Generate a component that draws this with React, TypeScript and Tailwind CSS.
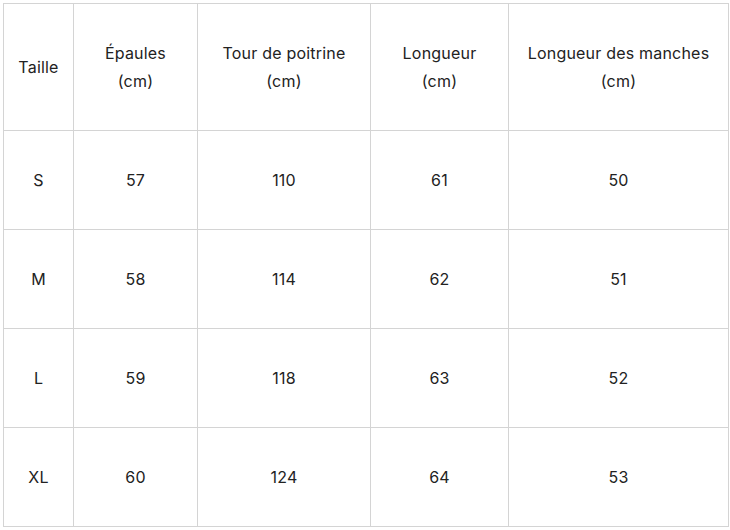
const headers = [
  ['Taille'],
  ['Épaules', '(cm)'],
  ['Tour de poitrine', '(cm)'],
  ['Longueur', '(cm)'],
  ['Longueur des manches', '(cm)'],
]

const rows = [
  ['S', '57', '110', '61', '50'],
  ['M', '58', '114', '62', '51'],
  ['L', '59', '118', '63', '52'],
  ['XL', '60', '124', '64', '53'],
]

const widths = ['w-[70px]', 'w-[124px]', 'w-[173px]', 'w-[138px]', 'w-[220px]']

export default function App() {
  return (
    <div className="bg-white w-[730px] h-[530px] p-[3px]" style={{ fontFamily: 'Inter, "Noto Sans", sans-serif' }}>
      <table className="table-fixed border-collapse w-[726px] text-[16px] tracking-[0.2px] text-[#222] leading-[28px]">
        <colgroup>
          {widths.map((w, i) => (
            <col key={i} className={w} />
          ))}
        </colgroup>
        <thead>
          <tr className="h-[127px]">
            {headers.map((h, i) => (
              <th key={i} className="border border-[#d4d4d4] font-normal text-center align-middle p-0">
                {h.map((line, j) => (
                  <div key={j}>{line}</div>
                ))}
              </th>
            ))}
          </tr>
        </thead>
        <tbody>
          {rows.map((r, i) => (
            <tr key={i} className="h-[99px]">
              {r.map((c, j) => (
                <td key={j} className="border border-[#d4d4d4] text-center align-middle p-0">
                  {c}
                </td>
              ))}
            </tr>
          ))}
        </tbody>
      </table>
    </div>
  )
}
